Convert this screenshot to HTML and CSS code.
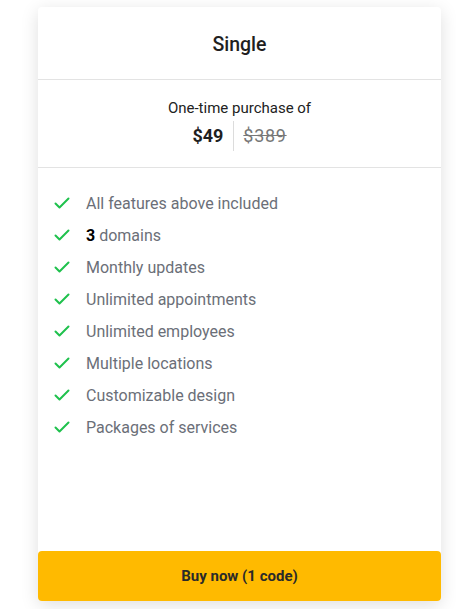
FILE: index.html
```html
<!DOCTYPE html>
<html>
<head>
<meta charset="utf-8">
<link rel="stylesheet" href="styles.css">
</head>
<body>
<div class="card">
  <div class="head">Single</div>
  <div class="price">
    <div class="label">One-time purchase of</div>
    <div class="amounts"><span class="now">$49</span><span class="old">$389</span></div>
  </div>
  <ul class="features">
    <li><svg viewBox="0 0 16 12"><path d="M1.5 6.5l4 4L14.5 1.5"/></svg><span>All features above included</span></li>
    <li><svg viewBox="0 0 16 12"><path d="M1.5 6.5l4 4L14.5 1.5"/></svg><span><b>3</b> domains</span></li>
    <li><svg viewBox="0 0 16 12"><path d="M1.5 6.5l4 4L14.5 1.5"/></svg><span>Monthly updates</span></li>
    <li><svg viewBox="0 0 16 12"><path d="M1.5 6.5l4 4L14.5 1.5"/></svg><span>Unlimited appointments</span></li>
    <li><svg viewBox="0 0 16 12"><path d="M1.5 6.5l4 4L14.5 1.5"/></svg><span>Unlimited employees</span></li>
    <li><svg viewBox="0 0 16 12"><path d="M1.5 6.5l4 4L14.5 1.5"/></svg><span>Multiple locations</span></li>
    <li><svg viewBox="0 0 16 12"><path d="M1.5 6.5l4 4L14.5 1.5"/></svg><span>Customizable design</span></li>
    <li><svg viewBox="0 0 16 12"><path d="M1.5 6.5l4 4L14.5 1.5"/></svg><span>Packages of services</span></li>
  </ul>
  <button class="buy">Buy now (1 code)</button>
</div>
</body>
</html>
```
FILE: styles.css
```css
html, body { margin: 0; padding: 0; background: #fff; }
body { font-family: Roboto, "Liberation Sans", sans-serif; padding: 7px 15px 8px 38px; }
.card {
  width: 403px;
  height: 594px;
  background: #fff;
  border-radius: 4px;
  box-shadow: 0 4px 18px rgba(0,0,0,0.13);
  display: flex;
  flex-direction: column;
}
.head {
  height: 73px;
  display: flex;
  align-items: center;
  justify-content: center;
  padding-top: 2px;
  box-sizing: border-box;
  font-size: 19.5px;
  font-weight: 500;
  color: #1f1f1f;
  border-bottom: 1px solid #e3e3e3;
}
.price {
  height: 88px;
  border-bottom: 1px solid #e3e3e3;
  display: flex;
  flex-direction: column;
  align-items: center;
  padding-top: 19px;
  box-sizing: border-box;
}
.label { font-size: 15px; color: #222; line-height: 18px; }
.amounts { display: flex; align-items: center; margin-top: 4px; height: 30px; }
.now { font-size: 18px; font-weight: 700; color: #1f1f1f; padding-right: 10px; border-right: 1px solid #dcdcdc; line-height: 30px; }
.old { font-size: 18px; color: #777; text-decoration: line-through; padding-left: 9px; line-height: 30px; letter-spacing: 0.7px; }
.features { list-style: none; margin: 0; padding: 19px 0 0 16px; flex: 1; }
.features li { display: flex; align-items: center; height: 32px; font-size: 16px; color: #6b6f78; }
.features svg { width: 16px; height: 12px; margin-right: 16px; fill: none; stroke: #1fc14d; stroke-width: 2; stroke-linecap: round; stroke-linejoin: round; }
.features b { color: #000; font-weight: 700; }
.buy {
  height: 50px;
  border: 0;
  border-radius: 4px;
  background: #ffba00;
  font-family: Roboto, "Liberation Sans", sans-serif;
  font-size: 15px;
  font-weight: 700;
  color: #2a2a2a;
}
```
